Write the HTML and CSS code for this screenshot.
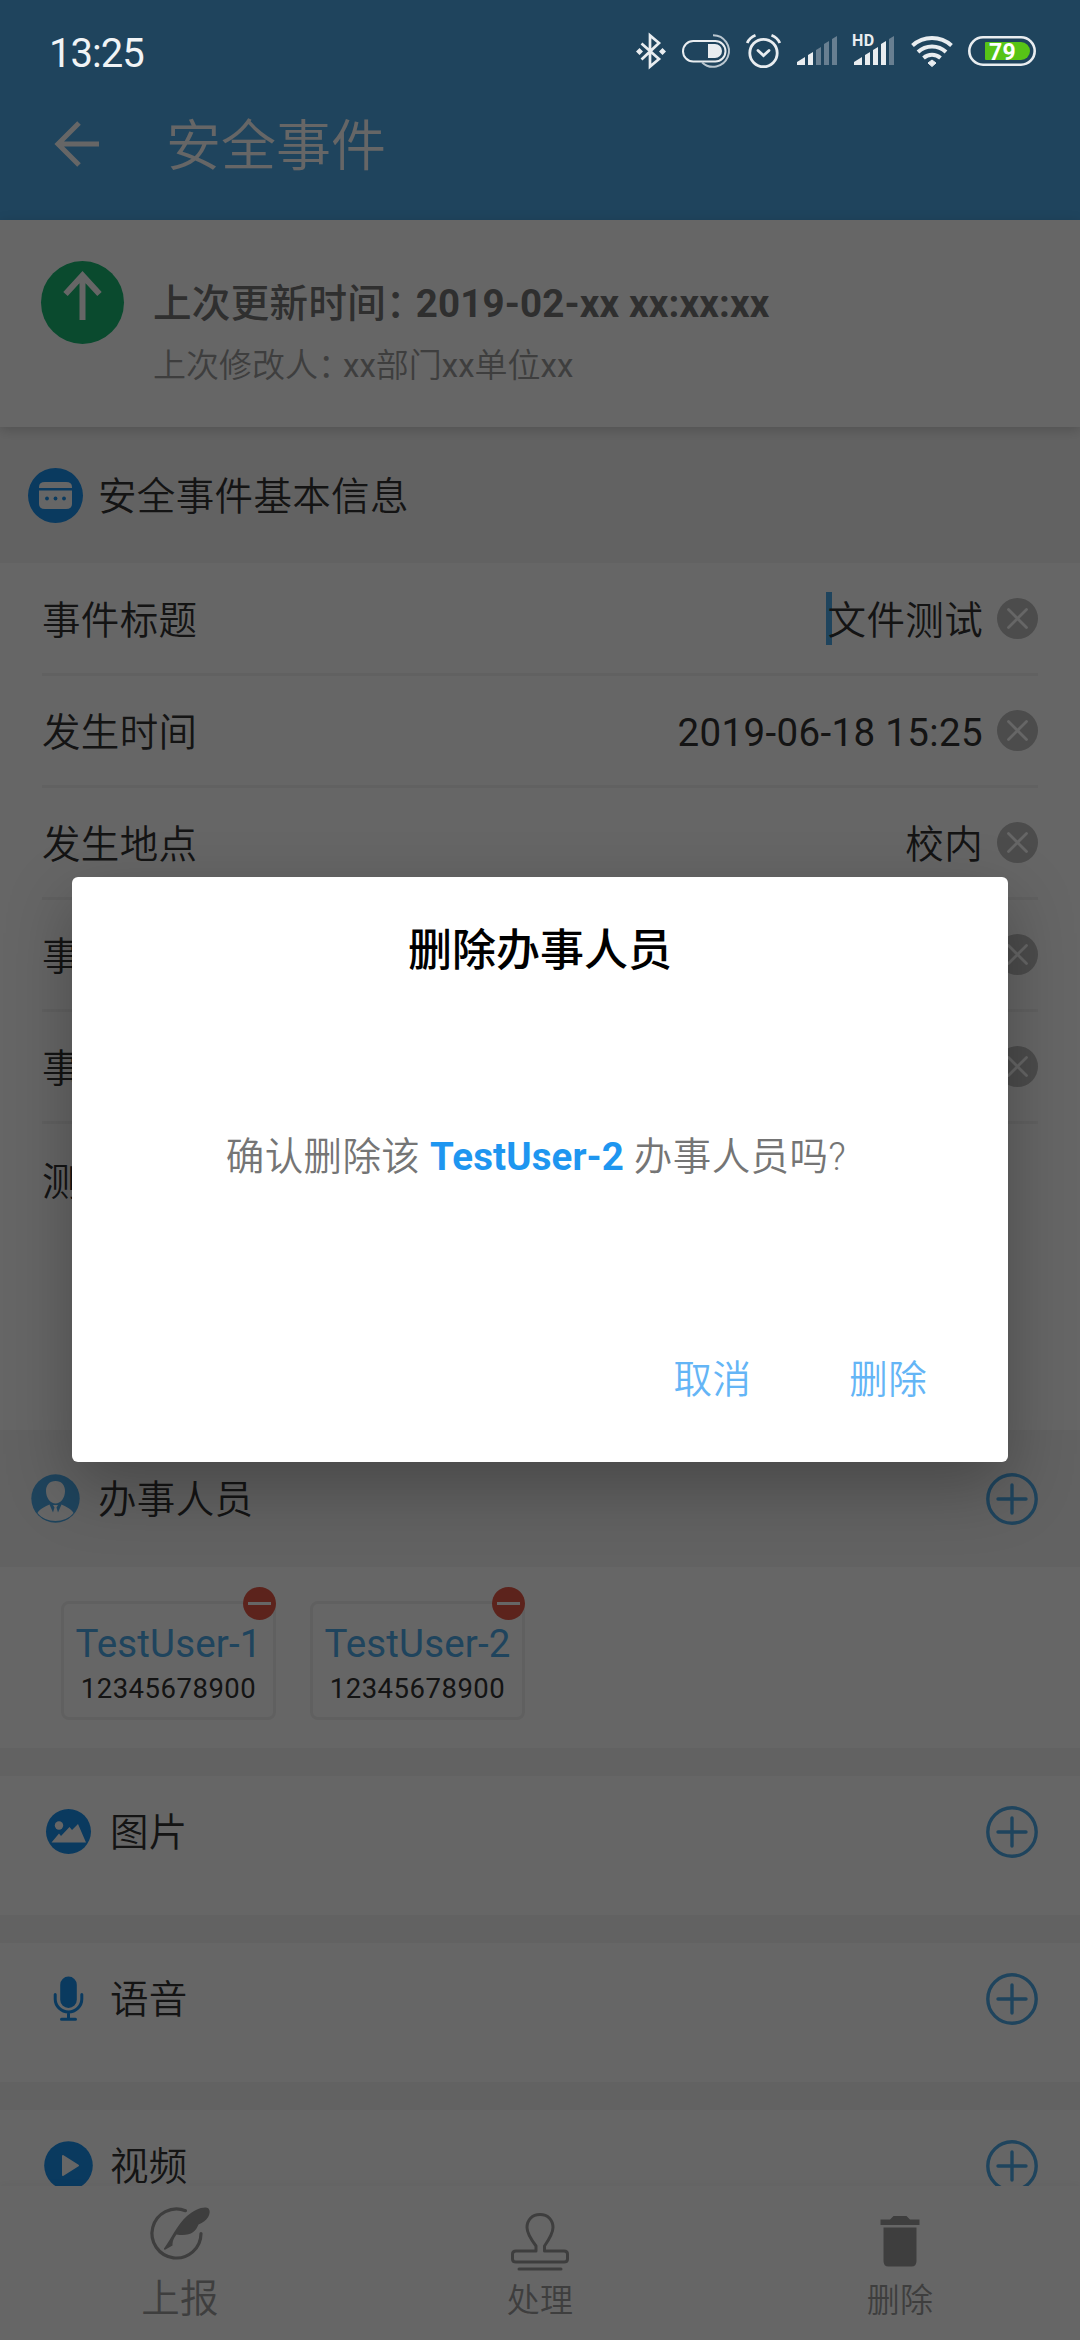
FILE: index.html
```html
<!DOCTYPE html>
<html lang="zh-CN">
<head>
<meta charset="utf-8">
<title>安全事件</title>
<link rel="stylesheet" href="styles.css">
</head>
<body>
<svg class="symbols" aria-hidden="true">
  <symbol id="clear" viewBox="0 0 41 41"><circle cx="20.5" cy="20.5" r="20.5" fill="#bdbdbd"/><path d="M11.5 11.5l18 18M29.5 11.5l-18 18" stroke="#fff" stroke-width="2.8" stroke-linecap="round"/></symbol>
  <symbol id="plus" viewBox="0 0 52 52"><g fill="none" stroke="#4eaae8" stroke-width="3.4" stroke-linecap="round"><circle cx="26" cy="26" r="24.2"/><path d="M26 12v28M12 26h28"/></g></symbol>
  <symbol id="minus" viewBox="0 0 33 33"><circle cx="16.5" cy="16.5" r="16.5" fill="#e55948"/><path d="M5 16.5h23" stroke="#fff" stroke-width="3"/></symbol>
</svg>
<div class="screen">
  <header class="top">
    <div class="status">
      <span class="time">13:25</span>
      <div class="status-icons">
        <svg width="30" height="34" viewBox="0 0 30 34"><path d="M5.500 9.500L23 25 14 32.500V1.500L23 9 5.500 25.500" fill="none" stroke="#e9edf0" stroke-width="2.700"/><path d="M3.500 14L7 17.500 3.500 21 0 17.500zM26.500 14L30 17.500 26.500 21 23 17.500z" fill="#e9edf0"/></svg>
        <svg width="49" height="34" viewBox="0 0 49 34"><rect x="1" y="7" width="42.500" height="20.500" rx="10.250" fill="none" stroke="#e9edf0" stroke-width="2"/><path d="M26 10h7a7 7 0 0 1 0 14h-7z" fill="#e9edf0"/><path d="M31 1.200a15.800 15.800 0 1 1-11 27" fill="none" stroke="#b9c6cf" stroke-width="2"/></svg>
        <svg width="35" height="34" viewBox="0 0 35 34"><g fill="none" stroke="#e9edf0" stroke-width="2.800"><circle cx="17.500" cy="19" r="13.700"/><path d="M12 16.500l5.500 5 5.500-5" stroke-linecap="round"/><path d="M1.200 9Q3.500 3.500 9.500 1.200M33.800 9Q31.500 3.500 25.500 1.200"/></g></svg>
        <svg width="41" height="34" viewBox="0 0 41 34"><path d="M0 31v-3l8-5v8zM11 31V21l5-3v13z" fill="#e9edf0"/><path d="M19 31V16l5-3v18zM27 31V10l5-3v24zM35 31V5l5-3v29z" fill="#687f91"/></svg>
        <svg width="42" height="34" viewBox="0 0 42 34"><path d="M1 31v-3l8-5v8zM12 31V21l5-3v13zM20 31V16l5-3v18zM28 31V10l5-3v24z" fill="#e9edf0"/><path d="M36 31V5l5-3v29z" fill="#687f91"/><text x="-1" y="12" class="hd">HD</text></svg>
        <svg width="42" height="34" viewBox="0 0 42 34"><g fill="none" stroke="#e9edf0" stroke-width="4"><path d="M1.500 11.500a29 29 0 0 1 39 0"/><path d="M7 18a20.500 20.500 0 0 1 28 0"/><path d="M12.500 24a13 13 0 0 1 17 0"/></g><path d="M21 26l4 3-4 3.500-4-3.500z" fill="#e9edf0" stroke="#e9edf0"/></svg>
        <svg width="68" height="34" viewBox="0 0 68 34"><rect x="1.300" y="3.300" width="65.400" height="27.400" rx="13.700" fill="none" stroke="#e9edf0" stroke-width="2.600"/><path d="M18 8h35a9 9 0 0 1 0 18H18a1 1 0 0 1-1-1V9a1 1 0 0 1 1-1z" fill="#57c416"/><text x="21" y="25.500" class="level">79</text></svg>
      </div>
    </div>
    <div class="toolbar">
      <svg width="44" height="46" viewBox="0 0 44 46"><path d="M24 2L3 23l21 21M3 23h41" fill="none" stroke="#fff" stroke-width="5"/></svg>
      <h1 class="title">安全事件</h1>
    </div>
  </header>

  <section class="update">
    <svg width="83" height="83" viewBox="0 0 83 83"><circle cx="41.500" cy="41.500" r="41.500" fill="#19b874"/><path d="M41.500 59V14M24.500 33L41.500 14.500 58.500 33" fill="none" stroke="#fff" stroke-width="6"/></svg>
    <div class="update-text">
      <p class="update-time">上次更新时间<span class="colon">：</span><b>2019-02-xx xx:xx:xx</b></p>
      <p class="update-by">上次修改人<span class="colon">：</span><span class="latin">xx</span>部门<span class="latin">xx</span>单位<span class="latin">xx</span></p>
    </div>
  </section>

  <div class="section-head">
    <svg width="55" height="55" viewBox="0 0 55 55"><circle cx="27.500" cy="27.500" r="27.500" fill="#1991ee"/><path d="M17 14h21q6 0 6 5v1H11v-1q0-5 6-5zM11 22.500h33V36q0 5-6 5H17q-6 0-6-5z" fill="#fff"/><g fill="#1991ee"><circle cx="19" cy="30.500" r="1.900"/><circle cx="27.500" cy="30.500" r="1.900"/><circle cx="36" cy="30.500" r="1.900"/></g></svg>
    <span>安全事件基本信息</span>
  </div>

  <section class="form">
    <div class="row"><span>事件标题</span><span class="value"><i class="caret"></i>文件测试</span><svg class="clear"><use href="#clear"/></svg></div>
    <div class="row"><span>发生时间</span><span class="value latin">2019-06-18 15:25</span><svg class="clear"><use href="#clear"/></svg></div>
    <div class="row"><span>发生地点</span><span class="value">校内</span><svg class="clear"><use href="#clear"/></svg></div>
    <div class="row"><span>事</span><span class="value"></span><svg class="clear"><use href="#clear"/></svg></div>
    <div class="row"><span>事</span><span class="value"></span><svg class="clear"><use href="#clear"/></svg></div>
    <div class="row row-note"><span>测</span></div>
  </section>

  <div class="section-head people-head">
    <svg width="49" height="49" viewBox="0 0 49 49"><circle cx="24.500" cy="24.500" r="24.200" fill="#4eaae8"/><path d="M24.500 7c6 0 9.500 4 9.500 10 0 7-4.500 12.500-9.500 12.500S15 24 15 17C15 11 18.500 7 24.500 7zM6.500 39c2-4 8-6.500 12-8.500l3.500 8 1.500-5-1.500-2.500h5l-1.500 2.500 1.500 5 3.500-8c4 2 10 4.500 12 8.500-8 10.500-28 10.500-36 0z" fill="#fff"/></svg>
    <span class="grow">办事人员</span>
    <svg class="plus"><use href="#plus"/></svg>
  </div>

  <section class="people">
    <div class="person"><b>TestUser-1</b><small>12345678900</small><svg class="minus"><use href="#minus"/></svg></div>
    <div class="person"><b>TestUser-2</b><small>12345678900</small><svg class="minus"><use href="#minus"/></svg></div>
  </section>

  <section class="media">
    <div class="media-row">
      <svg width="49" height="49" viewBox="0 0 49 49"><circle cx="24.500" cy="24.500" r="22.500" fill="#1991ee"/><circle cx="15" cy="18.500" r="4.200" fill="#fff"/><path d="M7.500 35.500l7.500-9 2 2.500 8.500-9 2.500 3 6-6 8 18.500z" fill="#fff"/></svg>
      <span class="grow">图片</span>
      <svg class="plus"><use href="#plus"/></svg>
    </div>
    <div class="media-row">
      <svg width="49" height="49" viewBox="0 0 49 49"><rect x="16.200" y="2.500" width="16.600" height="31.500" rx="8.300" fill="#1991ee"/><path d="M11.200 20.500v4.500a13.300 13 0 0 0 26.600 0v-4.500M24.500 38v7M17.500 45.200h14" fill="none" stroke="#1991ee" stroke-width="3" stroke-linecap="round"/></svg>
      <span class="grow">语音</span>
      <svg class="plus"><use href="#plus"/></svg>
    </div>
    <div class="media-row">
      <svg width="49" height="49" viewBox="0 0 49 49"><circle cx="24.500" cy="24.500" r="24.300" fill="#1991ee"/><path d="M19 15l15 9.500L19 34z" fill="#fff" stroke="#fff" stroke-width="2" stroke-linejoin="round"/></svg>
      <span class="grow">视频</span>
      <svg class="plus"><use href="#plus"/></svg>
    </div>
  </section>

  <nav class="actions">
    <div class="action action-report">
      <svg width="60" height="54" viewBox="0 0 60 54"><path d="M35.500 3.700A24.500 24.500 0 1 0 51 26.500" fill="none" stroke="#9b9b9b" stroke-width="3.200" stroke-linecap="round"/><path d="M14 41.500C21 32 27 18 37 9 45 2 55-1.500 58.500 1.500c3.500 4-1 13-10 16-3 8-9 12-22 10-2 3-4 5-4 11l-7 4q-2 .5-1.500-1z" fill="#9b9b9b"/></svg>
      <span>上报</span>
    </div>
    <div class="action">
      <svg width="58" height="58" viewBox="0 0 58 58"><g fill="none" stroke="#9b9b9b" stroke-width="3" stroke-linejoin="round"><path d="M25 38v-5C19 25 16 20 16 14.500 16 7 21 1.500 29 1.500S42 7 42 14.500C42 20 39 25 33.500 33v5H53q3.500 0 3.500 3v5q0 3-3.500 3H5q-3.500 0-3.500-3v-5q0-3 3.500-3z"/><path d="M8 56h42" stroke-linecap="round"/></g></svg>
      <span>处理</span>
    </div>
    <div class="action">
      <svg width="58" height="58" viewBox="0 0 58 58"><path d="M9.500 6.500h9.500l3.500-3.500h13l3.500 3.500h9.500v5.500h-39zM12.500 14.500h33V48q0 5.500-5 5.500h-23q-5 0-5-5.500z" fill="#9b9b9b"/></svg>
      <span>删除</span>
    </div>
  </nav>

  <div class="scrim"></div>
  <div class="dialog" role="dialog">
    <h2 class="dialog-title">删除办事人员</h2>
    <p class="message">确认删除该 <b>TestUser-2</b> 办事人员吗?</p>
    <div class="buttons"><span>取消</span><span>删除</span></div>
  </div>
</div>
</body>
</html>
```

FILE: styles.css
```css
* { box-sizing: border-box; margin: 0; padding: 0; }

body {
  width: 1080px;
  height: 2340px;
  overflow: hidden;
  font-family: Roboto, "Noto Sans CJK SC", sans-serif;
  font-size: 38.5px;
  line-height: 48px;
  font-weight: 350;
  letter-spacing: .35px;
  color: #333;
}

svg { display: block; flex: none; overflow: visible; }
.symbols { display: none; }
.grow { flex: 1; }

.screen {
  position: relative;
  display: flex;
  flex-direction: column;
  height: 2340px;
  overflow: hidden;
  background: #f6f6f6;
}

/* header */
.top {
  position: relative;
  flex: none;
  height: 220px;
  background: #4eaae8;
  box-shadow: 0 2px 10px rgba(0, 0, 0, .25);
}
.status {
  position: relative;
  z-index: 3;
  display: flex;
  justify-content: space-between;
  height: 71px;
  padding: 29px 44px 0 49px;
}
.time { padding-top: 1px; font-size: 40px; font-weight: 400; color: #f1f4f6; letter-spacing: -1px; }
.status-icons { display: flex; gap: 15.500px; padding-top: 5px; }
.hd { font: 700 16px Roboto, sans-serif; fill: #e9edf0; }
.level { font: 700 23px Roboto, sans-serif; fill: #fff; }
.toolbar {
  display: flex;
  align-items: center;
  gap: 67px;
  height: 145px;
  padding-left: 55px;
}
.title {
  padding-top: 5px;
  font-size: 55px;
  line-height: 70px;
  font-weight: 350;
  letter-spacing: 0;
  color: #fff;
}

/* last update */
.update {
  display: flex;
  flex: none;
  gap: 29px;
  height: 207px;
  padding: 41px 41px 0;
  background: #fff;
  box-shadow: 0 3px 12px rgba(0, 0, 0, .18);
  z-index: 0;
}
.top { z-index: auto; }
.update-text { padding-top: 19px; }
.update-time { font-weight: 500; color: #757575; }
.update-time b { font-weight: 700; letter-spacing: .15px; }
.update-by { margin-top: 14px; font-size: 33px; letter-spacing: 0; color: #9b9b9b; }
.colon { margin-right: -.24em; }

/* section headings */
.section-head {
  display: flex;
  flex: none;
  align-items: center;
  gap: 15px;
  height: 136px;
  padding: 0 42px 0 28px;
}
.section-head span { padding-top: 3px; }
.people-head { gap: 18px; height: 137px; padding-left: 31px; }
.plus { width: 52px; height: 52px; }

/* form */
.form {
  flex: none;
  height: 867px;
  padding: 1px 42px 0;
  background: #fff;
}
.row {
  display: flex;
  align-items: center;
  height: 112px;
  border-bottom: 3px solid #f3f3f3;
}
.row > span { padding-top: 4px; }
.row-note { border: 0; }
.value {
  display: flex;
  flex: 1;
  align-items: center;
  justify-content: flex-end;
  padding-right: 14px;
}
.latin { font-weight: 400; }
.caret {
  width: 6px;
  height: 53px;
  margin: -6px -4px -2px 0;
  background: #4eaae8;
}
.clear { width: 41px; height: 41px; }

/* people */
.people {
  display: flex;
  flex: none;
  gap: 34px;
  height: 181px;
  padding: 34px 61px 0;
  background: #fff;
}
.person {
  position: relative;
  display: flex;
  flex-direction: column;
  align-items: center;
  width: 215px;
  height: 119px;
  padding-top: 16px;
  border: 3px solid #f0f0f0;
  border-radius: 8px;
}
.person b { line-height: 48px; font-weight: 400; letter-spacing: .15px; color: #4eaae8; }
.person small { font-size: 27.500px; line-height: 42px; font-weight: 400; letter-spacing: .5px; }
.minus { position: absolute; top: -17px; right: -3px; width: 33px; height: 33px; }

/* attachments */
.media {
  display: flex;
  flex: 1;
  flex-direction: column;
  gap: 28px;
  min-height: 0;
  padding-top: 28px;
  overflow: hidden;
}
.media-row {
  display: flex;
  flex: none;
  align-items: flex-start;
  gap: 17px;
  height: 139px;
  padding: 31px 42px 0 44px;
  background: #fff;
}
.media-row .grow { padding-top: 2px; }
.media-row .plus { margin-top: -1px; }

/* bottom actions */
.actions {
  display: grid;
  flex: none;
  grid-template-columns: repeat(3, 1fr);
  height: 154px;
  background: #fff;
  box-shadow: 0 -2px 8px rgba(0, 0, 0, .04);
}
.action {
  display: flex;
  flex-direction: column;
  align-items: center;
  gap: 6px;
  padding-top: 27px;
  font-size: 33px;
  color: #9b9b9b;
}
.action-report { gap: 14px; padding-top: 21px; font-size: 38.500px; }

/* confirmation dialog */
.scrim { position: absolute; inset: 0; z-index: 2; background: rgba(0, 0, 0, .6); }
.dialog {
  position: absolute;
  top: 877px;
  left: 72px;
  z-index: 4;
  display: flex;
  flex-direction: column;
  width: 936px;
  height: 585px;
  padding: 45px 81px 58px;
  border-radius: 6px;
  background: #fff;
  box-shadow: 0 24px 66px rgba(0, 0, 0, .28);
}
.dialog-title {
  font-size: 44px;
  line-height: 58px;
  font-weight: 500;
  letter-spacing: 0;
  text-align: center;
  color: #000;
}
.message { margin: 153px 8px 0 0; text-align: center; letter-spacing: .4px; color: #757575; }
.message b { font-weight: 700; letter-spacing: .1px; color: #1e96f0; }
.buttons {
  display: flex;
  justify-content: flex-end;
  gap: 98px;
  margin-top: auto;
  color: #64b5f6;
}
```
